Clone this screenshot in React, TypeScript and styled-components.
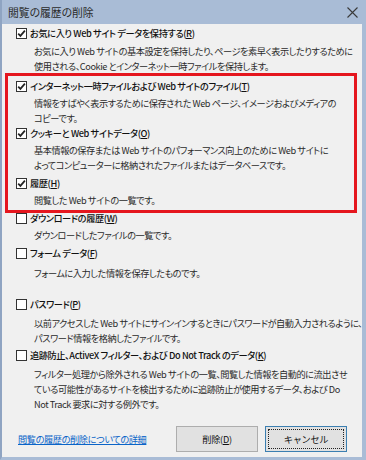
import React from 'react';
import styled, { createGlobalStyle } from 'styled-components';

const GlobalStyle = createGlobalStyle`
  html, body {
    margin: 0;
    padding: 0;
    background: #f0f0f0;
  }
  body {
    font-family: "Noto Sans CJK JP", "Noto Sans", sans-serif;
    font-feature-settings: "palt";
  }
`;

const Window = styled.div`
  position: relative;
  width: 366px;
  height: 460px;
  box-sizing: border-box;
  display: flex;
  flex-direction: column;
  background: #f0f0f0;
  border-left: 2px solid #8fa4c2;
  border-right: 4px solid #a9bcd6;
  border-bottom: 3px solid #a9bcd6;
  overflow: hidden;
`;

const TitleBar = styled.div`
  height: 24px;
  flex: 0 0 24px;
  display: flex;
  align-items: center;
  justify-content: space-between;
  background: #a9bcd6;
  margin-left: -2px;
  margin-right: -4px;
  padding: 0 8px 0 8px;
`;

const Title = styled.span`
  font-size: 10.8px;
  color: #2b2b2b;
`;

const Body = styled.div`
  flex: 1;
  display: flex;
  flex-direction: column;
  padding: 2px 0 0 14px;
`;

const Item = styled.div<{ space: number }>`
  margin-top: ${({ space }) => space}px;
`;

const Label = styled.label`
  display: flex;
  align-items: center;
  gap: 3px;
  height: 15px;
  font-size: 9.2px;
  letter-spacing: -0.4px;
  line-height: 15px;
  font-weight: 500;
  color: #111;
  white-space: nowrap;
`;

const Box = styled.span`
  width: 9px;
  height: 9px;
  flex: 0 0 9px;
  border: 1px solid #333;
  background: #fff;
  display: flex;
  align-items: center;
  justify-content: center;
`;

const Desc = styled.div<{ gap: number }>`
  margin-top: ${({ gap }) => gap}px;
  padding-left: 18px;
  font-size: 9.2px;
  letter-spacing: -0.45px;
  line-height: 15px;
  color: #2a2a2a;
  white-space: nowrap;
`;

const Key = styled.span`
  text-decoration: underline;
`;

const Footer = styled.div`
  margin-top: auto;
  margin-bottom: 5px;
  display: flex;
  align-items: center;
  padding-right: 15px;
`;

const Link = styled.a`
  font-size: 9.2px;
  letter-spacing: -0.4px;
  color: #0a64c8;
  text-decoration: underline;
  margin-left: 2px;
  margin-right: auto;
`;

const Button = styled.button<{ focused?: boolean }>`
  width: 82px;
  height: 26px;
  margin-left: 7px;
  font-family: inherit;
  font-size: 9.2px;
  letter-spacing: -0.3px;
  color: #111;
  background: #e1e1e1;
  border: 1px solid ${({ focused }) => (focused ? '#3c7fb1' : '#adadad')};
  position: relative;
  padding: 0;
  &::after {
    content: '';
    position: absolute;
    inset: 2px;
    border: 1px dotted ${({ focused }) => (focused ? '#222' : 'transparent')};
  }
`;

const RedFrame = styled.div`
  position: absolute;
  left: 3px;
  top: 73px;
  width: 346px;
  height: 134px;
  border: 3px solid #e5161e;
  pointer-events: none;
`;

const Check = () => (
  <svg width="9" height="9" viewBox="0 0 9 9">
    <path d="M1.2 4.6 L3.4 6.9 L7.9 1.6" fill="none" stroke="#222" strokeWidth="1.7" />
  </svg>
);

const CloseIcon = () => (
  <svg width="11" height="11" viewBox="0 0 11 11">
    <path d="M0.5 0.5 L10.5 10.5 M10.5 0.5 L0.5 10.5" stroke="#3a3a3a" strokeWidth="1.1" />
  </svg>
);

type Option = {
  label: string;
  accel: string;
  checked: boolean;
  lines: string[];
  space: number;
  gap: number;
};

const options: Option[] = [
  {
    label: 'お気に入り Web サイト データを保持する',
    accel: 'R',
    checked: true,
    lines: [
      'お気に入り Web サイトの基本設定を保持したり、ページを素早く表示したりするために',
      '使用される、Cookie とインターネット一時ファイルを保持します。',
    ],
    space: 0,
    gap: 3,
  },
  {
    label: 'インターネット一時ファイルおよび Web サイトのファイル',
    accel: 'T',
    checked: true,
    lines: ['情報をすばやく表示するために保存された Web ページ、イメージおよびメディアの', 'コピーです。'],
    space: 5,
    gap: 2,
  },
  {
    label: 'クッキーと Web サイトデータ',
    accel: 'O',
    checked: true,
    lines: [
      '基本情報の保存または Web サイトのパフォーマンス向上のために Web サイトに',
      'よってコンピューターに格納されたファイルまたはデータベースです。',
    ],
    space: 0,
    gap: 2,
  },
  {
    label: '履歴',
    accel: 'H',
    checked: true,
    lines: ['閲覧した Web サイトの一覧です。'],
    space: 3,
    gap: 2,
  },
  {
    label: 'ダウンロードの履歴',
    accel: 'W',
    checked: false,
    lines: ['ダウンロードしたファイルの一覧です。'],
    space: 3,
    gap: 2,
  },
  {
    label: 'フォーム データ',
    accel: 'F',
    checked: false,
    lines: ['フォームに入力した情報を保存したものです。'],
    space: 3,
    gap: 5,
  },
  {
    label: 'パスワード',
    accel: 'P',
    checked: false,
    lines: [
      '以前アクセスした Web サイトにサインインするときにパスワードが自動入力されるように、',
      'パスワード情報を格納したファイルです。',
    ],
    space: 16,
    gap: 4,
  },
  {
    label: '追跡防止、ActiveX フィルター、および Do Not Track のデータ',
    accel: 'K',
    checked: false,
    lines: [
      'フィルター処理から除外される Web サイトの一覧、閲覧した情報を自動的に流出させ',
      'ている可能性があるサイトを検出するために追跡防止が使用するデータ、および Do',
      'Not Track 要求に対する例外です。',
    ],
    space: 2,
    gap: 4,
  },
];

export default function App() {
  return (
    <>
      <GlobalStyle />
      <Window>
        <TitleBar>
          <Title>閲覧の履歴の削除</Title>
          <CloseIcon />
        </TitleBar>
        <Body>
          {options.map(o => (
            <Item key={o.accel} space={o.space}>
              <Label>
                <Box>{o.checked && <Check />}</Box>
                <span>
                  {o.label}(<Key>{o.accel}</Key>)
                </span>
              </Label>
              <Desc gap={o.gap}>
                {o.lines.map(l => (
                  <div key={l}>{l}</div>
                ))}
              </Desc>
            </Item>
          ))}
          <Footer>
            <Link href="#">閲覧の履歴の削除についての詳細</Link>
            <Button>
              削除(<Key>D</Key>)
            </Button>
            <Button focused>キャンセル</Button>
          </Footer>
        </Body>
        <RedFrame />
      </Window>
    </>
  );
}
